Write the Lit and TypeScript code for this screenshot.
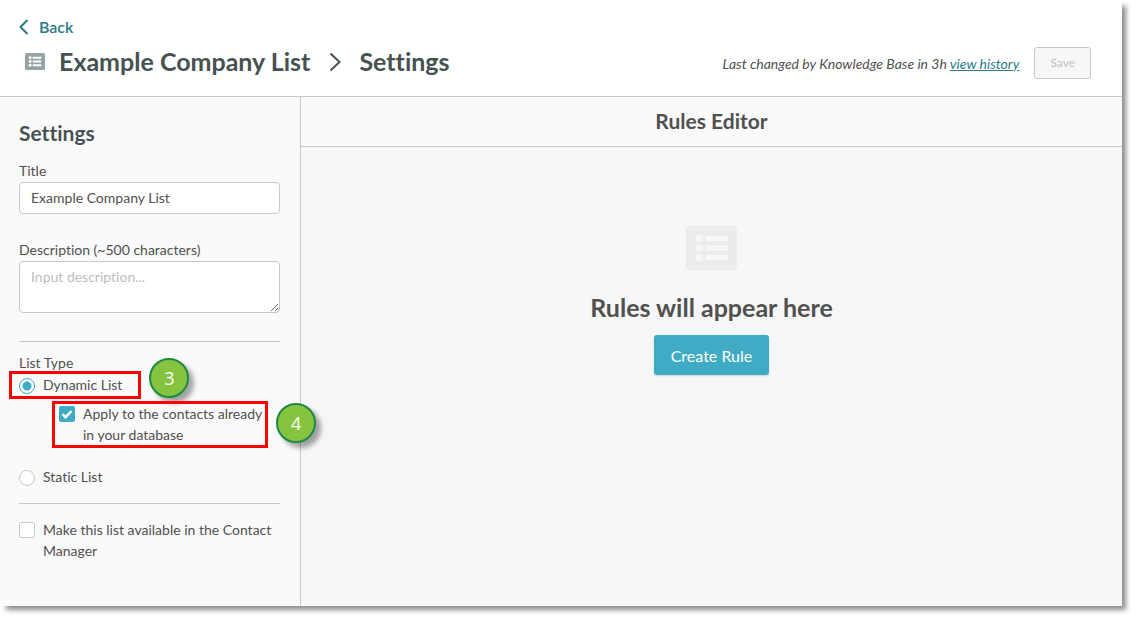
import { LitElement, html, css } from "lit";
import { customElement, property } from "lit/decorators.js";

@customElement("list-icon")
class ListIcon extends LitElement {
  static styles = css`
    :host {
      display: block;
    }
    svg {
      display: block;
      width: 100%;
      height: 100%;
    }
    .plate {
      fill: currentColor;
    }
    .mark {
      fill: var(--mark, #fff);
    }
  `;

  render() {
    return html`
      <svg viewBox="0 0 51 44" preserveAspectRatio="none" aria-hidden="true">
        <rect class="plate" width="51" height="44" rx="4" />
        ${[12.5, 22, 31.5].map(
          (y) => html`<svg viewBox="0 0 51 44">
            <circle class="mark" cx="13" cy=${y} r="3.8" />
            <rect class="mark" x="19.5" y=${y - 2.6} width="22" height="5.2" rx="1" />
          </svg>`
        )}
      </svg>
    `;
  }
}

@customElement("step-badge")
class StepBadge extends LitElement {
  static styles = css`
    :host {
      box-sizing: border-box;
      display: flex;
      align-items: center;
      justify-content: center;
      width: 40px;
      height: 40px;
      border: 2px solid #1c8a43;
      border-radius: 50%;
      background: #86c440;
      box-shadow: 5px 5px 5px rgba(0, 0, 0, 0.35);
      color: #fff;
      font: 18px/20px "Open Sans", sans-serif;
    }
  `;

  @property() step = "";

  render() {
    return html`${this.step}`;
  }
}

@customElement("app-root")
class AppRoot extends LitElement {
  static styles = css`
    * {
      box-sizing: border-box;
    }
    :host {
      display: flex;
      flex-direction: column;
      box-sizing: border-box;
      min-height: 100vh;
      padding: 0 15px 15px 0;
      background: #fff;
      color: #505050;
      font: 14px/21px Lato, sans-serif;
      font-variant-ligatures: none;
    }
    h1,
    h2,
    h3,
    p {
      margin: 0;
      font-weight: 700;
    }
    a {
      color: #2a7b88;
    }
    input,
    textarea,
    button {
      margin: 0;
      font: inherit;
      font-variant-ligatures: none;
      color: inherit;
    }
    .window {
      flex: 1;
      display: flex;
      flex-direction: column;
      background: #fff;
      box-shadow: 5px 5px 5px -1px rgba(0, 0, 0, 0.45);
    }
    .header {
      display: flex;
      justify-content: space-between;
      align-items: flex-end;
      padding: 15px 31px 17px 19px;
      border-bottom: 1px solid #c8c8c8;
    }
    .back {
      display: inline-flex;
      align-items: center;
      gap: 10px;
      font-size: 16px;
      line-height: 24px;
      font-weight: 600;
      text-decoration: none;
    }
    .back svg {
      width: 10px;
      height: 16px;
    }
    .crumbs {
      display: flex;
      align-items: center;
      padding: 5px 0 1px 6px;
      color: #465251;
    }
    .crumbs h1 {
      font-size: 25px;
      line-height: 33px;
    }
    .crumbs list-icon {
      width: 20px;
      height: 17px;
      margin-right: 14px;
      color: #95a5a6;
    }
    .crumbs svg {
      width: 12px;
      height: 20px;
      margin: 0 18px 0 19px;
    }
    .line {
      fill: none;
      stroke: currentColor;
      stroke-width: 2;
    }
    .status {
      display: flex;
      align-items: center;
      gap: 15px;
      font-style: italic;
    }
    .status p {
      font-weight: 400;
    }
    .save {
      height: 32px;
      padding: 0 15px 2px;
      border: 1px solid #c8c8c8;
      border-radius: 3px;
      background: #f7f7f7;
      color: #bfbfbf;
      font-size: 12px;
      font-style: normal;
    }
    .body {
      flex: 1;
      display: flex;
    }
    .sidebar {
      flex: none;
      width: 301px;
      padding: 21px 20px 44px 19px;
      border-right: 1px solid #c8c8c8;
      background: #fafafa;
    }
    .sidebar h2 {
      margin-bottom: 12px;
      color: #465251;
      font-size: 21px;
      line-height: 30px;
    }
    .field {
      display: flex;
      flex-direction: column;
      gap: 1px;
    }
    .field + .field {
      margin-top: 25px;
    }
    .box {
      width: 100%;
      padding: 4px 11px 6px;
      border: 1px solid #c8c8c8;
      border-radius: 4px;
      background: #fff;
    }
    .title {
      height: 32px;
    }
    .description {
      height: 52px;
      resize: vertical;
    }
    .box::placeholder {
      color: #bdbdbd;
      opacity: 1;
    }
    .types {
      display: flex;
      flex-direction: column;
      align-items: flex-start;
      margin: 28px 0 15px;
      padding: 0 0 16px;
      border: solid #c8c8c8;
      border-width: 1px 0;
    }
    .types-name {
      padding: 10px 0 1px;
    }
    .option {
      position: relative;
      display: flex;
      gap: 8px;
    }
    .nested {
      margin: 8px 0 21px 40px;
      white-space: nowrap;
    }
    .tick {
      flex: none;
      appearance: none;
      width: 16px;
      height: 16px;
      margin-top: 3px;
      border: 1px solid #c8c8c8;
      border-radius: 2px;
      background: #fff;
    }
    .tick[type="radio"] {
      margin-top: 4px;
      border-radius: 50%;
    }
    .tick[type="radio"]:checked {
      border-color: #40abc4;
      background: radial-gradient(circle, #40abc4 4px, #fff 5px);
    }
    .tick[type="checkbox"]:checked {
      border-color: #40abc4;
      background: #40abc4
        url("data:image/svg+xml,%3Csvg xmlns='http://www.w3.org/2000/svg' viewBox='0 0 14 14'%3E%3Cpath d='M2.5 7.2l3 3 6-6' fill='none' stroke='%23fff' stroke-width='2.4'/%3E%3C/svg%3E");
    }
    .marker {
      position: absolute;
      inset: -3px -19px -4px -10px;
      border: 3px solid #f00;
    }
    .nested .marker {
      inset: -2px -6px -3px -7px;
    }
    .option step-badge {
      position: absolute;
      top: -16px;
      right: -67px;
    }
    .nested step-badge {
      top: 0;
      right: -54px;
    }
    .editor {
      flex: 1;
      display: flex;
      flex-direction: column;
      background: #f7f7f7;
      text-align: center;
    }
    .editor h2 {
      padding: 9px 0 10px;
      border-bottom: 1px solid #c8c8c8;
      background: #fafafa;
      font-size: 21px;
      line-height: 30px;
    }
    .empty {
      display: flex;
      flex-direction: column;
      align-items: center;
      padding: 79px 20px 20px;
    }
    .empty list-icon {
      --mark: #f7f7f7;
      width: 51px;
      height: 44px;
      color: #ebebeb;
    }
    .empty h3 {
      padding: 19px 0 10px;
      font-size: 25px;
      line-height: 36px;
    }
    .create {
      height: 40px;
      padding: 0 17px;
      border: 0;
      border-radius: 3px;
      background: #40abc4;
      box-shadow: 0 1px 2px rgba(0, 0, 0, 0.15);
      color: #fff;
      font-size: 16px;
    }
  `;

  render() {
    return html`
      <div class="window">
        <header class="header">
          <div>
            <a class="back" href="#">
              <svg viewBox="0 0 10 16" aria-hidden="true">
                <path class="line" d="M8.5 1L1.5 8L8.5 15" />
              </svg>
              Back
            </a>
            <div class="crumbs">
              <list-icon></list-icon>
              <h1>Example Company List</h1>
              <svg viewBox="0 0 12 20" aria-hidden="true">
                <path class="line" d="M1.5 1.5L10.5 10L1.5 18.5" />
              </svg>
              <h1>Settings</h1>
            </div>
          </div>
          <div class="status">
            <p>
              Last changed by Knowledge Base in 3h <a href="#">view history</a>
            </p>
            <button class="save" disabled>Save</button>
          </div>
        </header>
        <div class="body">
          <form class="sidebar">
            <h2>Settings</h2>
            <div class="field">
              <label for="title">Title</label>
              <input class="box title" id="title" type="text" value="Example Company List" />
            </div>
            <div class="field">
              <label for="description">Description (~500 characters)</label>
              <textarea
                class="box description"
                id="description"
                placeholder="Input description..."
              ></textarea>
            </div>
            <div class="types" role="radiogroup" aria-labelledby="types-name">
              <div class="types-name" id="types-name">List Type</div>
              <label class="option">
                <input class="tick" type="radio" name="type" checked />
                Dynamic List
                <span class="marker"></span>
                <step-badge step="3"></step-badge>
              </label>
              <label class="option nested">
                <input class="tick" type="checkbox" checked />
                <span>Apply to the contacts already<br />in your database</span>
                <span class="marker"></span>
                <step-badge step="4"></step-badge>
              </label>
              <label class="option">
                <input class="tick" type="radio" name="type" />
                Static List
              </label>
            </div>
            <label class="option">
              <input class="tick" type="checkbox" />
              <span>Make this list available in the Contact Manager</span>
            </label>
          </form>
          <main class="editor">
            <h2>Rules Editor</h2>
            <div class="empty">
              <list-icon></list-icon>
              <h3>Rules will appear here</h3>
              <button class="create">Create Rule</button>
            </div>
          </main>
        </div>
      </div>
    `;
  }
}
